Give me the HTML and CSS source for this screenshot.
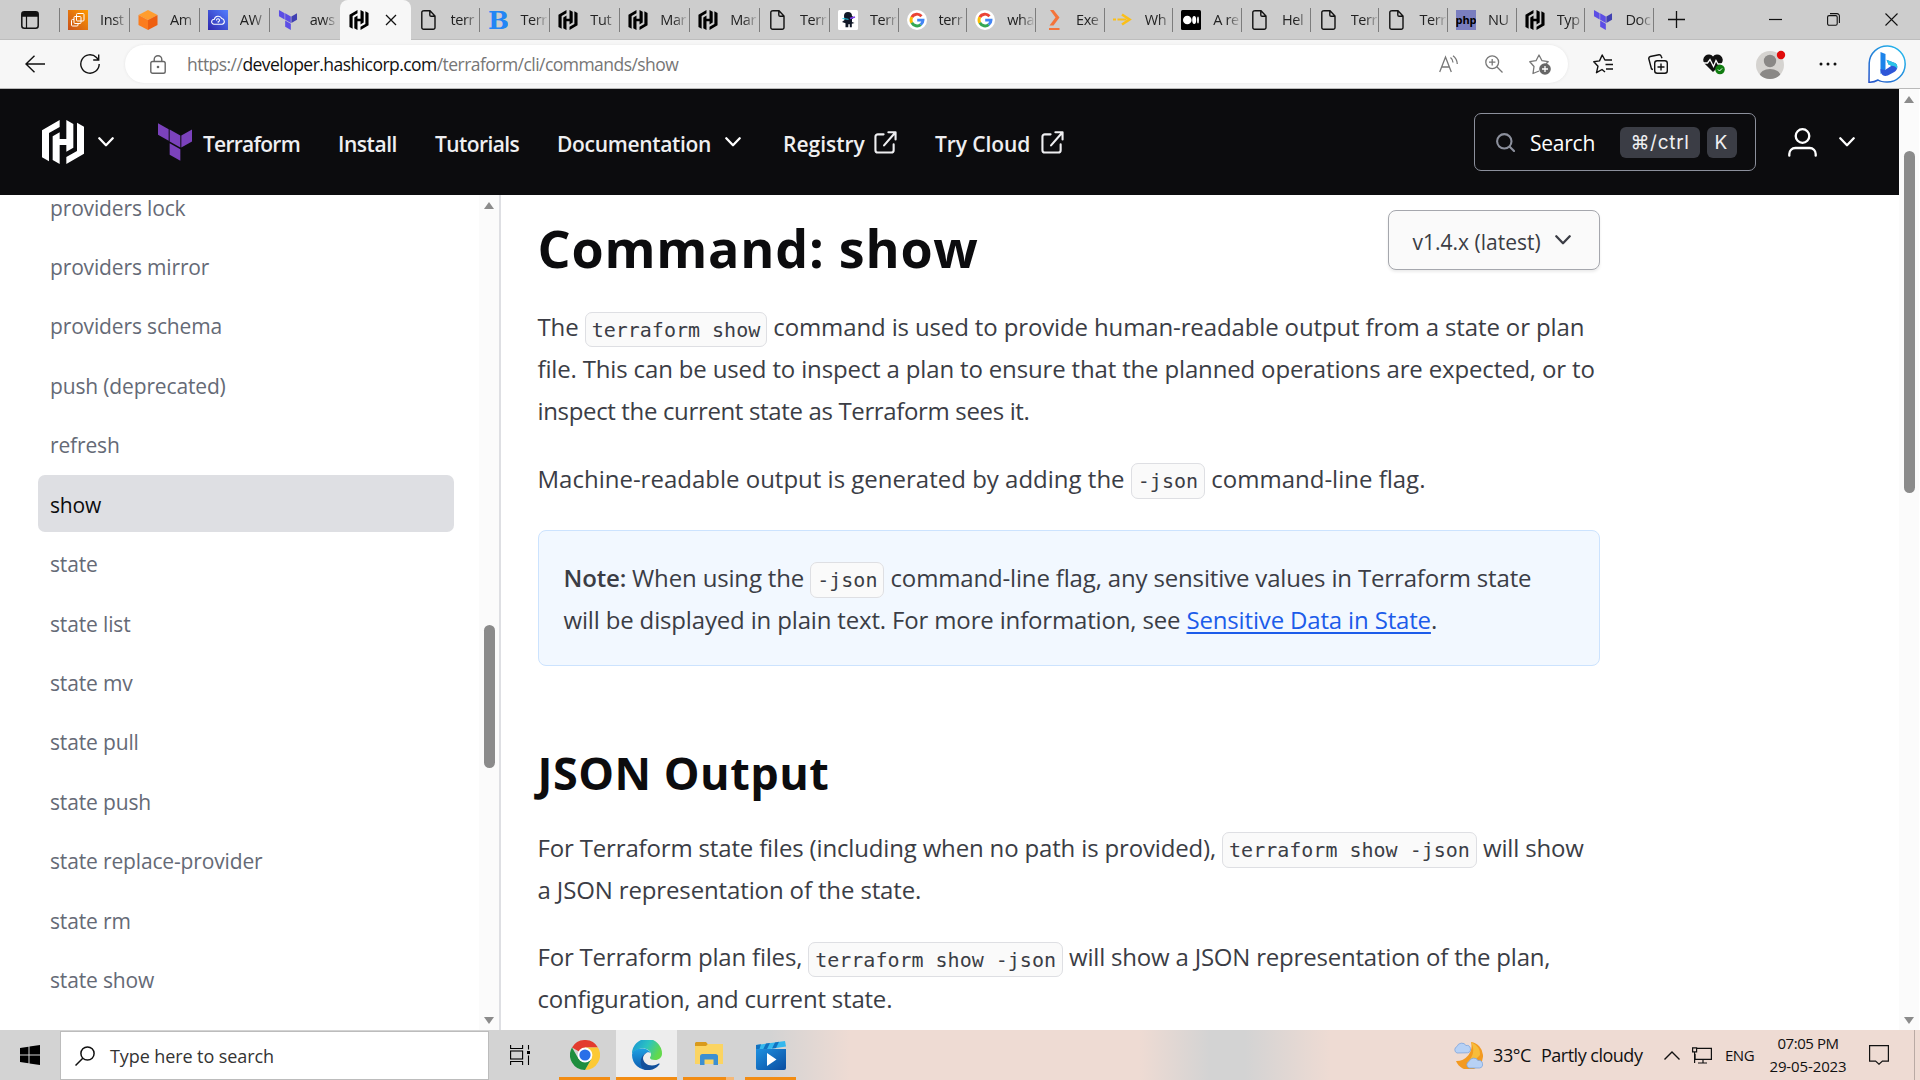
FILE: index.html
```html
<!DOCTYPE html>
<html lang="en">
<head>
<meta charset="utf-8">
<title>Command: show | Terraform | HashiCorp Developer</title>
<link rel="stylesheet" href="styles.css">
</head>
<body>
<svg class="defs" width="0" height="0" aria-hidden="true">
  <defs>
    <symbol id="hashi" viewBox="126 360 126 132"><path fill="currentColor" d="M179 360L126 391V472L147 484V399L179 381ZM199 360L220 372V443L199 455V435H179V492L158 480V409L179 397V417H199ZM199 492L252 461V380L231 368V453L199 471Z"/></symbol>
    <symbol id="terra" viewBox="474 370 102 113"><path fill="currentColor" d="M474 370L506 388V423L474 405ZM509 389L541 407V443L509 425ZM509 430L541 448V483L509 465Z"/><path d="M544 407L576 389V425L544 443Z"/></symbol>
    <symbol id="page" viewBox="0 0 20 20"><path fill="none" stroke="#111" stroke-width="1.4" d="M4.5.8H11l5 5.2v11.4a1.8 1.8 0 0 1-1.8 1.8H4.600a1.800 1.800 0 0 1-1.800-1.800V2.600A1.800 1.800 0 0 1 4.600.8ZM10.800 1v4a1.300 1.300 0 0 0 1.300 1.300H16"/></symbol>
    <symbol id="google" viewBox="0 0 20 20"><circle cx="10" cy="10" r="10" fill="#fff"/><g fill="none" stroke-width="2.900"><path stroke="#ea4335" d="M14.500 6.200A6 6 0 0 0 4.800 7.200"/><path stroke="#fbbc05" d="M4.800 7.100a6 6 0 0 0 0 5.800"/><path stroke="#34a853" d="M4.800 12.800a6 6 0 0 0 9 1.800"/><path stroke="#4285f4" d="M13.700 14.700A6 6 0 0 0 16 10.100H10.200"/></g></symbol>
    <symbol id="chev" viewBox="0 0 16 10"><path fill="none" stroke="currentColor" stroke-width="2.300" stroke-linecap="round" stroke-linejoin="round" d="M1.300 1.300L8 8.200 14.700 1.300"/></symbol>
    <symbol id="ext" viewBox="0 0 24 24"><path fill="none" stroke="currentColor" stroke-width="2.200" stroke-linecap="round" stroke-linejoin="round" d="M10 3.500H4a2.500 2.500 0 0 0-2.500 2.500v14A2.500 2.500 0 0 0 4 22.500h14a2.500 2.500 0 0 0 2.500-2.500v-6M15 1.300h7.500v7.500M22 1.800L10.500 15"/></symbol>
  </defs>
</svg>

<div class="tabbar">
  <div class="tab-menu"><svg width="18" height="18" viewBox="0 0 18 18"><rect x=".8" y=".8" width="16.400" height="16.400" rx="2.500" fill="none" stroke="#111" stroke-width="1.500"/><path fill="#111" d="M1 5.800V3a2 2 0 0 1 2-2h12a2 2 0 0 1 2 2v2.800Z"/><path stroke="#111" stroke-width="1.200" d="M5.500 5v12"/></svg></div>
  <div class="tab"><svg class="fav" viewBox="0 0 20 20"><defs><linearGradient id="g1" x1="0" y1="1" x2="1" y2="0"><stop stop-color="#c8511b"/><stop offset="1" stop-color="#f90"/></linearGradient></defs><rect width="20" height="20" fill="url(#g1)"/><g fill="none" stroke="#fff"><rect x="8.500" y="3.500" width="7.500" height="7.500" rx="1"/><rect x="6" y="6.500" width="7" height="7" rx="1"/><path d="M6 9.500H4.500a1 1 0 0 0-1 1V15a1 1 0 0 0 1 1H9a1 1 0 0 0 1-1v-1.500"/></g></svg><span class="tab-text">Inst</span></div>
  <div class="tab"><svg class="fav" viewBox="0 0 20 20"><path fill="#ff9d2e" d="M10 0l9.500 5L10 10 .5 5z"/><path fill="#fb7c1d" d="M.5 5L10 10v10L.5 15z"/><path fill="#ee5f10" d="M19.500 5L10 10v10l9.500-5z"/></svg><span class="tab-text">Am</span></div>
  <div class="tab"><svg class="fav" viewBox="0 0 20 20"><defs><linearGradient id="g2" x1="0" y1="1" x2="1" y2="0"><stop stop-color="#2e27ad"/><stop offset="1" stop-color="#527fff"/></linearGradient></defs><rect width="20" height="20" fill="url(#g2)"/><path fill="none" stroke="#fff" stroke-width="1.100" d="M6 14.300a2.500 2.500 0 0 1 .3-5A4 4 0 0 1 13.800 8.500a3 3 0 0 1 .5 5.800ZM8.500 10.500a1.500 1.500 0 1 1 1.700 1.300v1"/></svg><span class="tab-text">AW</span></div>
  <div class="tab last"><svg class="fav tf"><use href="#terra"/></svg><span class="tab-text">aws</span></div>
  <div class="tab active"><svg class="fav"><use href="#hashi"/></svg><svg class="close" viewBox="0 0 12 12"><path stroke="#111" stroke-width="1.300" d="M1 1l10 10M11 1L1 11"/></svg></div>
  <div class="tab"><svg class="fav"><use href="#page"/></svg><span class="tab-text">terr</span></div>
  <div class="tab"><svg class="fav" viewBox="0 0 20 20"><text x="0" y="19" class="fav-b">B</text></svg><span class="tab-text">Terr</span></div>
  <div class="tab"><svg class="fav"><use href="#hashi"/></svg><span class="tab-text">Tut</span></div>
  <div class="tab"><svg class="fav"><use href="#hashi"/></svg><span class="tab-text">Mar</span></div>
  <div class="tab"><svg class="fav"><use href="#hashi"/></svg><span class="tab-text">Mar</span></div>
  <div class="tab"><svg class="fav"><use href="#page"/></svg><span class="tab-text">Terr</span></div>
  <div class="tab narrow"><svg class="fav" viewBox="0 0 20 20"><rect width="20" height="20" rx="1.500" fill="#fff"/><path fill="#111827" d="M6 6a4 4 0 0 1 8 0l1.500 1-1 2H14v3l2.500 1-2.700.8v3.500h-2v-3h-1.500v3H7.500v-4L4 12l2.500-2Z"/><path stroke="#7c3aed" stroke-width="1.500" d="M12 8.500l5-1.500"/><path stroke="#22d3ee" stroke-width="1" d="M4.500 8.500l6 .8"/></svg><span class="tab-text">Terr</span></div>
  <div class="tab narrow"><svg class="fav"><use href="#google"/></svg><span class="tab-text">terr</span></div>
  <div class="tab narrow"><svg class="fav"><use href="#google"/></svg><span class="tab-text">wha</span></div>
  <div class="tab narrow"><svg class="fav" viewBox="0 0 20 20"><path fill="#f4743b" d="M6 0h3.500l6 7.500-6 8H5.500l6-8zM5 18h10.500v2H5z"/></svg><span class="tab-text">Exe</span></div>
  <div class="tab narrow"><svg class="fav" viewBox="0 0 20 20"><path fill="none" stroke="#fbbf18" stroke-width="2.600" d="M9 4.500l7.500 5L9 14.500"/><path stroke="#fbbf18" stroke-width="2" d="M0 9.500h3m1.500 0h9"/></svg><span class="tab-text">Wh</span></div>
  <div class="tab narrow"><svg class="fav" viewBox="0 0 20 20"><rect width="20" height="20" rx="1.500"/><circle cx="6.300" cy="10" r="4.300" fill="#fff"/><ellipse cx="13.200" cy="10" rx="2" ry="4" fill="#fff"/><ellipse cx="17" cy="10" rx=".9" ry="3.500" fill="#fff"/></svg><span class="tab-text">A re</span></div>
  <div class="tab narrow"><svg class="fav"><use href="#page"/></svg><span class="tab-text">Hel</span></div>
  <div class="tab narrow"><svg class="fav"><use href="#page"/></svg><span class="tab-text">Terr</span></div>
  <div class="tab narrow"><svg class="fav"><use href="#page"/></svg><span class="tab-text">Terr</span></div>
  <div class="tab narrow"><svg class="fav" viewBox="0 0 20 20"><rect width="20" height="20" fill="#7a7ebf"/><text x="10" y="13.800" text-anchor="middle" class="fav-php">php</text></svg><span class="tab-text">NU</span></div>
  <div class="tab narrow"><svg class="fav"><use href="#hashi"/></svg><span class="tab-text">Typ</span></div>
  <div class="tab narrow"><svg class="fav tf"><use href="#terra"/></svg><span class="tab-text">Doc</span></div>
  <svg class="new-tab" viewBox="0 0 17 17"><path stroke="#111" stroke-width="1.300" d="M8.500 0v17M0 8.500h17"/></svg>
  <div class="win">
    <svg width="13" height="13" viewBox="0 0 13 13"><path stroke="#111" stroke-width="1.200" d="M0 6.500h13"/></svg>
    <svg width="13" height="13" viewBox="0 0 13 13"><g fill="none" stroke="#111" stroke-width="1.100"><rect x=".6" y="2.600" width="9.600" height="9.600" rx="1.500"/><path d="M3 .6h7a2.400 2.400 0 0 1 2.400 2.400v7"/></g></svg>
    <svg width="13" height="13" viewBox="0 0 13 13"><path stroke="#111" stroke-width="1.100" d="M.5.5l12 12M12.500.5l-12 12"/></svg>
  </div>
</div>

<div class="toolbar">
  <svg class="back" viewBox="0 0 20 18"><path fill="none" stroke="#111" stroke-width="1.400" d="M20 9H1M9.500.7L1 9l8.500 8.300"/></svg>
  <svg class="reload" viewBox="0 0 20 20"><path fill="none" stroke="#111" stroke-width="1.400" d="M19.200 10A9.200 9.200 0 1 1 16.500 3.500L18.500 5.700M18.700.5v5.500h-5.500"/></svg>
  <div class="address">
    <svg class="lock" viewBox="0 0 16 19"><g fill="none" stroke="#666" stroke-width="1.400"><rect x=".8" y="6.500" width="14.400" height="11.700" rx="1.800"/><path d="M4.200 6.500V4.500a3.800 3.800 0 0 1 7.600 0v2"/></g><circle cx="8" cy="12" r="1.300" fill="#666"/></svg>
    <span class="url">https://<b>developer.hashicorp.com</b>/terraform/cli/commands/show</span>
    <div class="address-icons">
      <svg width="20" height="18" viewBox="0 0 20 18"><g fill="none" stroke="#777" stroke-width="1.300"><path d="M.7 17L6.500 2 12.300 17M2.700 12h7.700M11.500 2.500q2.500 2 2.500 5M14 .8q4 3 4.300 8.200"/></g></svg>
      <svg width="18" height="18" viewBox="0 0 18 18"><g fill="none" stroke="#777" stroke-width="1.300"><circle cx="7.200" cy="7.200" r="6.400"/><path d="M11.800 11.800l5.700 5.700M7.200 4v6.400M4 7.200h6.400"/></g></svg>
      <svg width="22" height="21" viewBox="0 0 22 21"><path fill="none" stroke="#777" stroke-width="1.300" stroke-linejoin="round" d="M10 17l-6 2.500 1-7L.8 7.700l6.200-1L10 1l3 5.700 6.200 1L17 9.800"/><circle cx="16" cy="15" r="5.800" fill="#666"/><path stroke="#fff" stroke-width="1.300" d="M16 12v6M13 15h6"/></svg>
    </div>
  </div>
  <div class="tools">
    <svg class="tool-fav" viewBox="0 0 20 20"><path fill="none" stroke="#111" stroke-width="1.400" stroke-linejoin="round" d="M12 18l-3-2.500L3.500 18.700l1.500-6.500L.8 7.700l5.700-.8L9.200 1l2.700 5H19M12.500 10.500H20M13 15h7"/></svg>
    <svg class="tool-col" viewBox="0 0 20 20"><g fill="none" stroke="#111" stroke-width="1.400"><path d="M5 15.500L3.500 15 .8 4.800Q.500 3 2.300 2.500L11 .8q1.600-.2 2.200 1.500l.8 2"/><rect x="6.700" y="6.700" width="12.600" height="12.600" rx="2.500"/><path d="M13 9.500v7M9.500 13h7"/></g></svg>
    <svg class="tool-heart" viewBox="0 0 22 21"><path fill="#111" d="M10 18L1.500 9.500A5 5 0 0 1 10 2.500a5 5 0 0 1 8.500 7Z"/><path fill="none" stroke="#fff" stroke-width="1.300" d="M0 9h4.500L7 5.500l3.500 7 2.500-6 2 3.500h6"/><circle cx="17" cy="15.500" r="4.800" fill="#107c10"/><path fill="none" stroke="#fff" d="M15 15.500l1.500 1.500 2.600-2.600"/></svg>
    <svg class="tool-user" viewBox="0 0 30 29"><defs><clipPath id="uc"><circle cx="14" cy="15" r="14"/></clipPath></defs><circle cx="14" cy="15" r="14" fill="#d5d3d0"/><g fill="#8a8886" clip-path="url(#uc)"><circle cx="14" cy="11" r="6.200"/><ellipse cx="14" cy="26" rx="10.500" ry="7"/></g><circle cx="25" cy="5" r="4.200" fill="#e00b0b"/></svg>
    <svg class="tool-more" viewBox="0 0 18 4"><g fill="#111"><circle cx="2" cy="2" r="1.500"/><circle cx="9" cy="2" r="1.500"/><circle cx="16" cy="2" r="1.500"/></g></svg>
    <svg class="tool-bing" viewBox="0 0 38 38"><defs><linearGradient id="bg" x1="1" y1="0" x2="0" y2="1"><stop stop-color="#25c3f0"/><stop offset="1" stop-color="#2350c8"/></linearGradient></defs><path fill="#fff" stroke="url(#bg)" stroke-width="1.500" d="M1 37.200L1.200 18A18 18 0 1 1 19 37Q13 37 10 35Q6 37.500 1 37.200Z"/><path fill="#1c83ea" d="M12.500 7l5 2v15.500l-5 4.500z"/><path fill="#2d56d8" d="M12.500 24l4.500 1 6.500-4.200-3-1.300-2-4.800 9 3.600q1.800 1 1.800 3.500 0 3.500-3 5.300l-6.500 3.500q-3 1.200-5.300-.5-2-1.500-2-6z"/><path fill="#2bc4e8" d="M18.500 14.700l9 3.600q2.500 1.700 1.500 5.500-1.500-2.800-5.500-3l-3-1.300z"/></svg>
  </div>
</div>

<div class="viewport">
  <div class="site">
    <header class="header">
      <svg class="logo"><use href="#hashi"/></svg>
      <svg class="chev logo-chev"><use href="#chev"/></svg>
      <svg class="tf-logo"><use href="#terra"/></svg>
      <nav class="nav">
        <a class="nav-terraform"><span>Terraform</span></a>
        <a class="nav-install"><span>Install</span></a>
        <a class="nav-tutorials"><span>Tutorials</span></a>
        <a class="nav-docs"><span>Documentation</span><svg class="chev"><use href="#chev"/></svg></a>
        <a class="nav-registry"><span>Registry</span><svg class="ext"><use href="#ext"/></svg></a>
        <a class="nav-cloud"><span>Try Cloud</span><svg class="ext"><use href="#ext"/></svg></a>
      </nav>
      <div class="search">
        <svg class="search-icon" viewBox="0 0 19 19"><g fill="none" stroke="#8c909c" stroke-width="2.100" stroke-linecap="round"><circle cx="8.300" cy="8.300" r="7.200"/><path d="M13.700 13.700l4.300 4.300"/></g></svg>
        <span class="search-text">Search</span>
        <kbd class="kbd kbd-ctrl">⌘/ctrl</kbd><kbd class="kbd kbd-k">K</kbd>
      </div>
      <svg class="user" viewBox="0 0 29 29"><g fill="none" stroke="#fff" stroke-width="2.300" stroke-linecap="round"><circle cx="14.500" cy="8" r="6.800"/><path d="M1.300 27.700v-1.700a6 6 0 0 1 6-6h14.400a6 6 0 0 1 6 6v1.700"/></g></svg>
      <svg class="chev"><use href="#chev"/></svg>
    </header>
    <div class="columns">
      <aside class="sidebar">
        <ul class="side-list">
          <li class="side-item">providers lock</li>
          <li class="side-item">providers mirror</li>
          <li class="side-item">providers schema</li>
          <li class="side-item">push (deprecated)</li>
          <li class="side-item">refresh</li>
          <li class="side-item current">show</li>
          <li class="side-item">state</li>
          <li class="side-item">state list</li>
          <li class="side-item">state mv</li>
          <li class="side-item">state pull</li>
          <li class="side-item">state push</li>
          <li class="side-item">state replace-provider</li>
          <li class="side-item">state rm</li>
          <li class="side-item">state show</li>
        </ul>
        <div class="scroll side-scroll"><i class="up"></i><i class="thumb"></i><i class="down"></i></div>
      </aside>
      <main class="main">
        <div class="title-row">
          <h1 class="h1">Command: show</h1>
          <button class="version"><span>v1.4.x (latest)</span><svg class="chev"><use href="#chev"/></svg></button>
        </div>
        <p class="para"><span class="line snug">The <code>terraform show</code> command is used to provide human-readable output from a state or plan</span> <span class="line tight">file. This can be used to inspect a plan to ensure that the planned operations are expected, or to</span> <span class="line tightest">inspect the current state as Terraform sees it.</span></p>
        <p class="para"><span class="line">Machine-readable output is generated by adding the <code>-json</code> command-line flag.</span></p>
        <div class="note"><span class="line tight"><strong>Note:</strong> When using the <code>-json</code> command-line flag, any sensitive values in Terraform state</span> <span class="line tight">will be displayed in plain text. For more information, see <a class="link">Sensitive Data in State</a>.</span></div>
        <h2 class="h2">JSON Output</h2>
        <p class="para"><span class="line tight">For Terraform state files (including when no path is provided), <code>terraform show -json</code> will show</span> <span class="line snug">a JSON representation of the state.</span></p>
        <p class="para"><span class="line tighter">For Terraform plan files, <code>terraform show -json</code> will show a JSON representation of the plan,</span> <span class="line tighter">configuration, and current state.</span></p>
      </main>
    </div>
  </div>
  <div class="scroll page-scroll"><i class="up"></i><i class="thumb"></i><i class="down"></i></div>
</div>

<div class="taskbar">
  <div class="start"><svg width="20" height="20" viewBox="0 0 20 20"><path d="M0 3l8.500-1.300v7.800H0zM9.500 1.500L20 0v9.500H9.500zM0 10.500h8.500v7.800L0 17zM9.500 10.500H20V20L9.500 18.500z"/></svg></div>
  <div class="task-search"><svg width="20" height="20" viewBox="0 0 20 20"><g fill="none" stroke="#111" stroke-width="1.500"><circle cx="12.500" cy="7.500" r="6.600"/><path d="M7.800 12.200L.5 19.500"/></g></svg><span>Type here to search</span></div>
  <svg class="taskview" viewBox="0 0 20 20"><g fill="none" stroke="#000" stroke-width="1.100"><path d="M.6 0v3.500h12V0M.6 20v-3.500h12V20"/><rect x=".6" y="6" width="12" height="8"/><path d="M18.500 0v4.500M18.500 10.500V20"/></g><rect x="17" y="6" width="3" height="3"/></svg>
  <div class="app chrome"><svg width="30" height="30" viewBox="0 0 30 30"><path fill="#e33b2e" d="M15 15L2 7.500A15 15 0 0 1 28 7.500H15z"/><path fill="#fcc934" d="M28 7.500A15 15 0 0 1 15 30l6.500-11.500L15 7.500z"/><path fill="#1e8e3e" d="M2 7.500l6.500 11.250L15 22l6 -2.500L15 30A15 15 0 0 1 2 7.500z"/><circle cx="15" cy="15" r="7.400" fill="#fff"/><circle cx="15" cy="15" r="5.600" fill="#2a6fe8"/></svg></div>
  <div class="app edge"><svg width="30" height="30" viewBox="0 0 30 30"><defs><linearGradient id="e1" x1="0" y1="0" x2="1" y2=".4"><stop stop-color="#1790d8"/><stop offset=".55" stop-color="#2cc3c0"/><stop offset="1" stop-color="#63d94c"/></linearGradient><linearGradient id="e2" x1="0" y1="0" x2="0" y2="1"><stop stop-color="#1fa0e2"/><stop offset="1" stop-color="#0c5bb0"/></linearGradient></defs><path fill="url(#e1)" d="M0 14A15 15 0 0 1 30 13.500c0 4-3 6.500-7 6.500-3 0-5-1-5-2.300 0-.9 1-1.300 1-3.200C19 11 15.500 8.500 11 8.500 5.500 8.500 1.500 11 0 14z"/><path fill="url(#e2)" d="M0 15c0-4 5-7 11-6.500 4 .4 7 2.500 7.700 4.500-1-.8-2.200-1-3.200-.7-4 1-5.500 5-4.500 9S15.500 29 17 29.800A15 15 0 0 1 0 15z"/><path fill="#12509b" d="M11 18c0 4 4 7.500 9 7.500 3.500 0 5.500-1.500 6.800-2 .7-.2 1 .3.600.9A15 15 0 0 1 14 30C9 29 7.500 22 9.500 18c1-2.500 3.500-5 6-5.700-2 1.200-4.500 3-4.500 5.700z"/></svg></div>
  <div class="app files"><svg width="28" height="24" viewBox="0 0 28 24"><path fill="#d99a1c" d="M1 0h10l2 2.500V6H0V1z"/><path fill="#fbd462" d="M0 4h11l2-2h15v20H0z"/><path fill="#3d8fd1" d="M5 23v-8.500A2.500 2.500 0 0 1 7.500 12h13a2.500 2.500 0 0 1 2.500 2.500V23h-4.500v-5.500h-9V23z"/></svg></div>
  <div class="app film"><svg width="30" height="29" viewBox="0 0 30 29"><defs><linearGradient id="f1" x1="0" y1="0" x2="1" y2="1"><stop stop-color="#1e90e0"/><stop offset="1" stop-color="#0a4da0"/></linearGradient></defs><path fill="#35b8ee" d="M0 4L29 0l1 5.500L1 10z"/><path fill="#1272c0" d="M0 4l5-.7L3 9.500H0zM10 2.600l4-.5-3 6-4 .5zM19 1.400l4-.6-3 6.200-4 .6z"/><path fill="url(#f1)" d="M0 8h30v19a2 2 0 0 1-2 2H2a2 2 0 0 1-2-2z"/><path fill="#fff" d="M11 12v13l9.500-6.500z"/></svg></div>
  <div class="tray">
    <svg class="weather" viewBox="0 0 30 28"><path fill="#f39a20" d="M18 1a14 14 0 1 1-15 19A15 15 0 0 0 18 1z"/><path fill="#f7bd3b" d="M18 1q6 12-4 20 8-1 13-7Q28 6 18 1z"/><g fill="#b7d1f5" stroke="#7ea4dc" stroke-width=".8"><path d="M4 12a3.500 3.500 0 0 1 0-6.500 5 5 0 0 1 9-1 3.700 3.700 0 0 1 1.500 7.300z"/><path d="M16 27a3.500 3.500 0 0 1 0-6.500 5 5 0 0 1 9-1 3.800 3.800 0 0 1 1.500 7.500z"/></g></svg>
    <span class="temp">33°C</span><span class="cloud">Partly cloudy</span>
    <svg class="tray-up" viewBox="0 0 16 9"><path fill="none" stroke="#111" stroke-width="1.400" d="M.5 8.500L8 1l7.500 7.500"/></svg>
    <svg class="net" viewBox="0 0 20 17"><g fill="none" stroke="#111" stroke-width="1.200"><path d="M5 1.300h14.400v11H3V7M11 12v4M6 16h9"/><path d="M.6.8h4v4h-4zM2.600 5v11"/></g></svg>
    <span class="eng">ENG</span>
    <div class="clock"><span class="time">07:05 PM</span><span>29-05-2023</span></div>
    <svg class="notif" viewBox="0 0 20 20"><path fill="none" stroke="#111" stroke-width="1.200" d="M.6.6h18.800v15.500h-6l-3.400 3-3.400-3h-6z"/></svg>
    <div class="peek"></div>
  </div>
</div>
</body>
</html>
```

FILE: styles.css
```css
* { box-sizing: border-box; }
body {
  margin: 0; width: 1920px; height: 1080px; overflow: hidden;
  display: flex; flex-direction: column;
  font-family: "Open Sans", "Noto Sans", sans-serif; background: #fff; color: #3b3d45;
}
svg { display: block; flex: none; }
.defs { position: absolute; }

/* browser tabs */
.tabbar { height: 40px; flex: none; display: flex; align-items: center; background: #cdcdcd; border-bottom: 1px solid #bdbdbd; color: #222; }
.tab-menu { width: 60px; flex: none; padding-left: 21px; height: 24px; display: flex; align-items: center; border-right: 1px solid #7d7d7d; }
.tab { width: 69.900px; flex: none; height: 24px; padding-left: 8px; display: flex; align-items: center; border-right: 1px solid #7d7d7d; }
.tab.narrow { width: 68.700px; }
.tab.last { border-right-color: transparent; }
.fav { width: 20px; height: 20px; color: #000; }
.fav.tf { color: #5c4ee5; fill: #4040b2; }
.fav-b { font: bold 25px "DejaVu Serif", serif; fill: #2386f5; }
.fav-php { font: bold 11px "Open Sans", sans-serif; fill: #000; }
.tab-text { width: 27px; margin-left: 12px; white-space: nowrap; font-size: 14.500px; letter-spacing: -.4px; line-height: 24px; mask-image: linear-gradient(90deg, #000 50%, transparent 105%); }
.tab.active { width: 71px; height: 40px; margin: 0 0 -1px; padding-left: 9px; background: #f7f7f7; border: 0; border-radius: 8px 8px 0 0; }
.close { width: 12px; height: 12px; margin-left: 16px; }
.new-tab { width: 17px; height: 17px; margin-left: 14px; }
.win { margin-left: auto; margin-right: 22px; display: flex; gap: 45px; }

/* address row */
.toolbar { height: 49px; flex: none; display: flex; align-items: center; background: #f7f7f7; border-bottom: 1px solid #b9b9b9; }
.back { width: 20px; height: 18px; margin-left: 25px; }
.reload { width: 20px; height: 20px; margin-left: 35px; }
.address { width: 1443px; height: 38px; margin-left: 25px; padding-left: 25px; display: flex; align-items: center; background: #fff; border-radius: 19px; box-shadow: 0 0 3px #e4e4e4; }
.lock { width: 16px; height: 19px; }
.url { margin-left: 21px; font-size: 17.500px; letter-spacing: -.54px; color: #767676; white-space: nowrap; }
.url b { font-weight: 400; color: #111; }
.address-icons { margin-left: auto; margin-right: 17px; display: flex; align-items: center; gap: 26px; }
.tools { display: flex; align-items: center; }
.tool-fav { width: 20px; height: 20px; margin-left: 25px; }
.tool-col { width: 20px; height: 20px; margin-left: 35px; }
.tool-heart { width: 22px; height: 21px; margin-left: 35px; }
.tool-user { width: 30px; height: 29px; margin-left: 31px; }
.tool-more { width: 18px; height: 4px; margin-left: 33px; }
.tool-bing { width: 38px; height: 38px; margin-left: 31px; }

/* page */
.viewport { flex: 1; min-height: 0; display: flex; }
.site { width: 1899px; flex: none; display: flex; flex-direction: column; overflow: hidden; }
.header { height: 106px; flex: none; display: flex; align-items: center; background: #0c0c0e; color: #efeff1; padding-left: 42px; }
.logo { width: 42px; height: 44px; color: #fff; }
.chev { width: 16px; height: 10px; color: #fff; }
.logo-chev { margin-left: 14px; }
.tf-logo { width: 34px; height: 38px; margin-left: 44px; color: #7b42bc; fill: #7b42bc; }
.nav { display: flex; align-items: center; font-size: 21px; font-weight: 600; white-space: nowrap; }
.nav a { display: flex; align-items: center; justify-content: space-between; }
.nav span { line-height: 30px; padding-top: 3px; }
.nav-terraform { margin-left: 11px; width: 97px; letter-spacing: -.760px; }
.nav-install { margin-left: 38px; width: 59px; letter-spacing: -.460px; }
.nav-tutorials { margin-left: 38px; width: 85px; letter-spacing: -.600px; }
.nav-docs { margin-left: 37px; width: 184px; letter-spacing: -.320px; }
.nav-registry { margin-left: 42px; width: 114px; }
.nav-cloud { margin-left: 38px; width: 129px; letter-spacing: -.100px; }
.ext { width: 23px; height: 23px; }
.search { width: 282px; height: 58px; margin-left: auto; padding-left: 21px; display: flex; align-items: center; border: 1px solid #8c909c; border-radius: 7px; }
.search-icon { width: 19px; height: 19px; }
.search-text { margin-left: 15px; padding-top: 2px; font-size: 21px; letter-spacing: -.240px; color: #fff; width: 90px; flex: none; }
.kbd { height: 31px; border-radius: 6px; background: #3b3d45; color: #efeff1; font: 400 19px/31px Inter, "DejaVu Sans", sans-serif; display: flex; justify-content: center; }
.kbd-ctrl { width: 80px; letter-spacing: .7px; }
.kbd-k { width: 30px; margin-left: 7px; padding-right: 2px; }
.user { width: 29px; height: 29px; margin-left: 32px; }
.user + .chev { margin: 0 44px 0 22px; }
.columns { flex: 1; min-height: 0; display: flex; }
.sidebar { width: 501px; flex: none; display: flex; border-right: 2px solid #dedfe3; overflow: hidden; }
.side-list { list-style: none; margin: -17.500px 25px 0 38px; padding: 0; width: 416px; flex: none; display: flex; flex-direction: column; gap: 2.450px; }
.side-item { height: 57px; flex: none; padding-left: 12px; border-radius: 7px; font-size: 21px; letter-spacing: -.150px; line-height: 61px; color: #656a76; white-space: nowrap; }
.side-item.current { background: #dedfe3; color: #0c0c0e; }
.scroll { width: 20px; flex: none; background: #fbfbfb; display: flex; flex-direction: column; align-items: center; }
.scroll .up { border: 5px solid transparent; border-bottom: 7px solid #8b8b8b; border-top: 0; width: 0; }
.scroll .down { border: 5px solid transparent; border-top: 7px solid #8b8b8b; border-bottom: 0; width: 0; margin-top: auto; margin-bottom: 6px; }
.thumb { width: 11px; border-radius: 6px; background: #8b8b8b; }
.side-scroll .up { margin-top: 7px; }
.side-scroll .thumb { height: 143px; margin-top: 416px; }
.page-scroll .up { margin-top: 7px; }
.page-scroll .thumb { height: 342px; margin-top: 48px; }

.main { margin-left: 36.500px; width: 1062px; }
.title-row { display: flex; justify-content: space-between; height: 111px; align-items: flex-start; }
.h1 { margin: 15px 0 0; font-size: 52px; letter-spacing: .780px; line-height: 76px; font-weight: 700; color: #0c0c0e; white-space: nowrap; }
.version { width: 212px; height: 60px; margin-top: 15px; padding: 3px 28px 0 24px; display: flex; align-items: center; justify-content: space-between; border: 1px solid #a5a7ad; border-radius: 8px; background: #fafafa; box-shadow: 0 2px 3px rgba(0,0,0,.08); color: #3b3d45; font: 500 21px/30px "Open Sans", sans-serif; white-space: nowrap; }
.version .chev { color: #3b3d45; margin-top: -3px; }
.para { margin: 0 0 25.500px; font-size: 24px; line-height: 42px; }
.line { display: block; white-space: nowrap; }
.snug { letter-spacing: -.130px; }
.tight { letter-spacing: -.160px; }
.tighter { letter-spacing: -.200px; }
.tightest { letter-spacing: -.350px; }
code { font: 20px/1 "DejaVu Sans Mono", monospace; letter-spacing: 0; padding: 4.500px 6px 5px; border: 1px solid #dedfe3; border-radius: 7px; background: #fafafa; }
.note { margin: 30px 0 0; height: 136px; padding: 26px 25px 0; border: 1px solid #cce3fe; border-radius: 8px; background: #f2f8ff; font-size: 24px; line-height: 42px; }
.note strong { font-weight: 600; }
.link { color: #1c5cea; text-decoration: underline; text-decoration-thickness: 2px; text-underline-offset: 3px; }
.h2 { margin: 76px 0 23px; font-size: 45px; letter-spacing: .500px; line-height: 62px; font-weight: 700; color: #0c0c0e; white-space: nowrap; }

/* taskbar */
.taskbar { height: 50px; flex: none; display: flex; color: #111; background: linear-gradient(90deg, #d3d3d3 0, #d3d3d3 770px, #eedbd3 850px, #eedbd3 1140px, #d3d3d3 1210px, #d3d3d3 1245px, #eedbd3 1330px); }
.start { width: 60px; display: flex; align-items: center; padding-left: 20px; }
.task-search { width: 429px; height: 49px; margin-top: 1px; display: flex; align-items: center; gap: 15px; padding-left: 14px; background: #fff; border: 1px solid #bcbcbc; font-size: 18px; letter-spacing: -.090px; color: #333; }
.taskview { width: 20px; height: 20px; margin: 15px 29px 0 21px; }
.app { height: 50px; display: flex; justify-content: center; padding-top: 10px; border-bottom: 3px solid #f28c13; }
.chrome { width: 51px; }
.edge { width: 61px; margin-left: 6px; background: #ededed; }
.files { width: 51px; margin-left: 6px; padding-top: 12px; border-image: linear-gradient(90deg, #f28c13 80%, #f5b877 80%) 3; border-style: solid; border-width: 0 0 3px; }
.film { width: 51px; margin-left: 11px; padding-top: 11px; }
.tray { margin-left: auto; display: flex; align-items: center; height: 50px; white-space: nowrap; }
.weather { width: 30px; height: 28px; }
.temp { margin-left: 10px; width: 48px; font-size: 18px; letter-spacing: -.410px; }
.cloud { width: 102px; font-size: 18px; letter-spacing: -.500px; }
.tray-up { width: 16px; height: 9px; margin-left: 21px; }
.net { width: 20px; height: 17px; margin-left: 12px; }
.eng { margin-left: 13px; width: 29px; font-size: 15px; letter-spacing: -.500px; }
.clock { width: 92px; margin-left: 8px; display: flex; flex-direction: column; align-items: center; font-size: 15px; letter-spacing: -.120px; line-height: 23px; }
.time { letter-spacing: -.460px; }
.notif { width: 20px; height: 20px; margin-left: 15px; }
.peek { width: 6px; height: 50px; margin-left: 25px; border-left: 1px solid #b9aaa4; }
```
